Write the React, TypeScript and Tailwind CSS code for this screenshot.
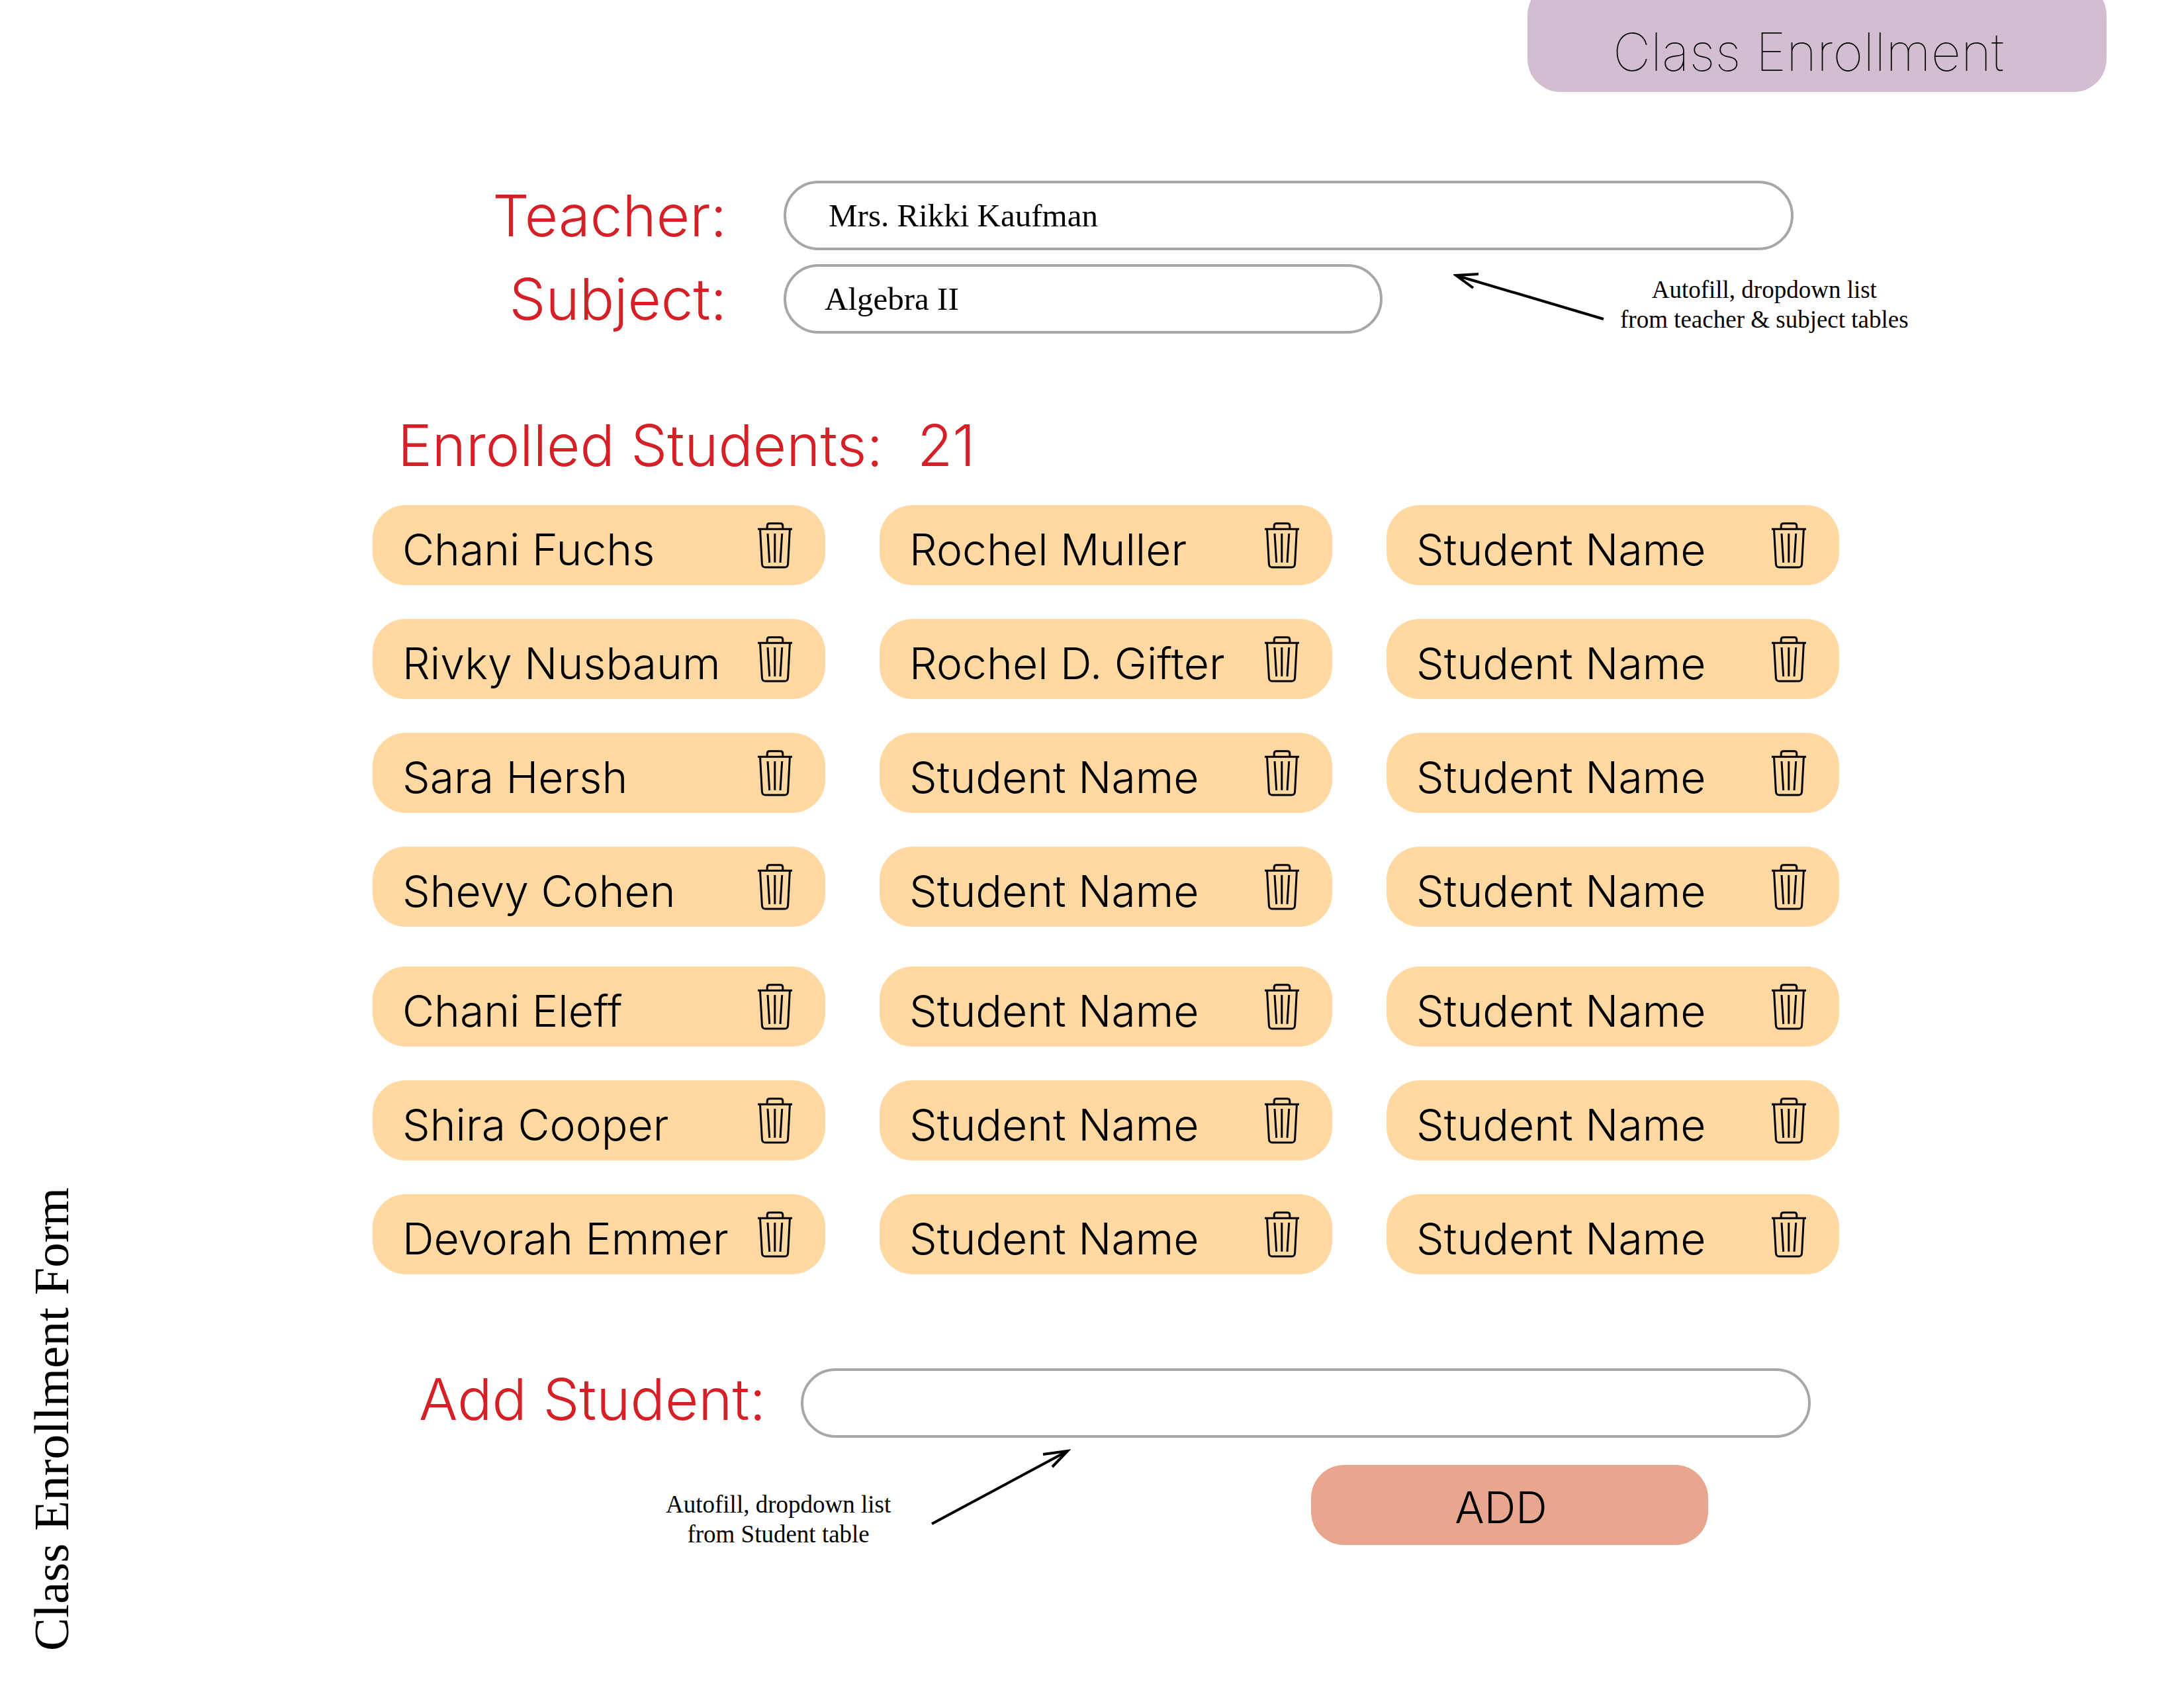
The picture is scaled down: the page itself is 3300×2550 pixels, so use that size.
import { useState } from "react";

const studentRows: string[][] = [
  ["Chani Fuchs", "Rochel Muller", "Student Name"],
  ["Rivky Nusbaum", "Rochel D. Gifter", "Student Name"],
  ["Sara Hersh", "Student Name", "Student Name"],
  ["Shevy Cohen", "Student Name", "Student Name"],
  ["Chani Eleff", "Student Name", "Student Name"],
  ["Shira Cooper", "Student Name", "Student Name"],
  ["Devorah Emmer", "Student Name", "Student Name"],
];

const rowGroups = [studentRows.slice(0, 4), studentRows.slice(4)];

const labelClass =
  "font-['Inter',sans-serif] font-light text-[87px] leading-[100px] text-[#d42027] whitespace-nowrap";
const fieldClass =
  "block h-[105px] min-w-0 rounded-full border-4 border-[#a7a7a9] bg-white font-['Liberation_Serif',serif] text-[49px] leading-[60px] text-black outline-none";
const noteClass =
  "text-center font-['Liberation_Serif',serif] text-[37px] leading-[45px] whitespace-nowrap";

function TrashIcon() {
  return (
    <svg
      viewBox="0 0 52 70"
      className="h-[70px] w-[52px]"
      fill="none"
      stroke="#000"
      strokeWidth="3"
      aria-hidden="true"
    >
      <path d="M0 10.3H52" />
      <path d="M14.2 10V5.5Q14.2 1.8 18 1.8H34Q37.8 1.8 37.8 5.5V10" />
      <path d="M3.5 10.5L6.4 63Q6.8 68 11.5 68H40.5Q45.2 68 45.6 63L48.4 10.5" />
      <path d="M15 17L17.7 60.8M25.8 17V60.8M36.7 17L34 60.8" />
    </svg>
  );
}

function StudentCard({ name }: { name: string }) {
  return (
    <li className="flex h-[121px] items-center justify-between rounded-[50px] bg-[#ffd9a1] pr-[50px] pl-[45px]">
      <span className="pt-[13px] font-['Inter',sans-serif] text-[66px] leading-[72px] font-light whitespace-nowrap text-black">
        {name}
      </span>
      <button type="button" aria-label={`Remove ${name}`} className="shrink-0 cursor-pointer">
        <TrashIcon />
      </button>
    </li>
  );
}

export default function App() {
  const [teacher, setTeacher] = useState("Mrs. Rikki Kaufman");
  const [subject, setSubject] = useState("Algebra II");
  const [student, setStudent] = useState("");

  return (
    <div className="flex min-h-screen bg-white text-black [font-optical-sizing:none]">
      <aside className="flex w-[120px] shrink-0 items-end pb-[56px] pl-[36px]">
        <p className="rotate-180 font-['Liberation_Serif',serif] text-[75px] leading-[84px] whitespace-nowrap [writing-mode:vertical-rl]">
          Class Enrollment Form
        </p>
      </aside>

      <main className="min-w-0 flex-1">
        <header className="flex justify-end pr-[117px]">
          <h1 className="-mt-[27px] flex h-[166px] w-[875px] items-end justify-center rounded-[50px] bg-[#d3bdd0] pr-[26px] pb-[16px] font-['Inter',sans-serif] text-[79px] leading-[90px] font-thin">
            Class Enrollment
          </h1>
        </header>

        <form className="pr-[521px] pl-[443px]" onSubmit={(e) => e.preventDefault()}>
          <div className="flex flex-col gap-[21px] pt-[134px] pr-[69px]">
            <div className="flex items-center gap-[86px]">
              <label htmlFor="teacher" className={`${labelClass} w-[535px] text-right`}>
                Teacher:
              </label>
              <input
                id="teacher"
                type="text"
                value={teacher}
                onChange={(e) => setTeacher(e.target.value)}
                className={`${fieldClass} flex-1 px-[64px]`}
              />
            </div>
            <div className="relative flex items-center gap-[86px]">
              <label htmlFor="subject" className={`${labelClass} w-[535px] text-right`}>
                Subject:
              </label>
              <input
                id="subject"
                type="text"
                value={subject}
                onChange={(e) => setSubject(e.target.value)}
                className={`${fieldClass} w-[905px] px-[58px]`}
              />
              <div className="absolute top-[12px] left-[1633px] flex items-start gap-[24px]">
                <svg
                  viewBox="0 0 228 74"
                  className="h-[74px] w-[228px]"
                  fill="none"
                  stroke="#000"
                  strokeWidth="4"
                  aria-hidden="true"
                >
                  <path d="M4 5L227 71M38 3L4 5L30 24" />
                </svg>
                <p className={`${noteClass} pt-[4px]`}>
                  Autofill, dropdown list
                  <br />
                  from teacher &amp; subject tables
                </p>
              </div>
            </div>
          </div>

          <h2 className={`${labelClass} flex gap-[52px] pt-[119px] pl-[38px]`}>
            <span>Enrolled Students:</span>
            <span>21</span>
          </h2>

          <div className="flex flex-col gap-[60px] pt-[40px]">
            {rowGroups.map((rows, g) => (
              <ul key={g} className="grid grid-cols-3 gap-x-[82px] gap-y-[51px]">
                {rows.flat().map((name, i) => (
                  <StudentCard key={i} name={name} />
                ))}
              </ul>
            ))}
          </div>

          <div className="flex items-center gap-[44px] pt-[142px] pr-[43px] pl-[70px]">
            <label htmlFor="student" className={`${labelClass} -my-[10px] w-[533px] pb-[12px]`}>
              Add Student:
            </label>
            <input
              id="student"
              type="text"
              value={student}
              onChange={(e) => setStudent(e.target.value)}
              className={`${fieldClass} flex-1 px-[64px]`}
            />
          </div>

          <div className="flex items-start justify-between pr-[198px] pl-[443px]">
            <div className="flex items-start gap-[60px] pt-[15px]">
              <p className={`${noteClass} pt-[63px]`}>
                Autofill, dropdown list
                <br />
                from Student table
              </p>
              <svg
                viewBox="0 0 212 118"
                className="h-[118px] w-[212px]"
                fill="none"
                stroke="#000"
                strokeWidth="4"
                aria-hidden="true"
              >
                <path d="M2 115L207 5M170 10L207 5L184 29" />
              </svg>
            </div>
            <button
              type="submit"
              className="mt-[41px] h-[121px] w-[600px] cursor-pointer rounded-[50px] bg-[#e9a68f] pt-[6px] pr-[26px] font-['Inter',sans-serif] text-[66px] leading-[72px] font-light"
            >
              ADD
            </button>
          </div>
        </form>
      </main>
    </div>
  );
}
